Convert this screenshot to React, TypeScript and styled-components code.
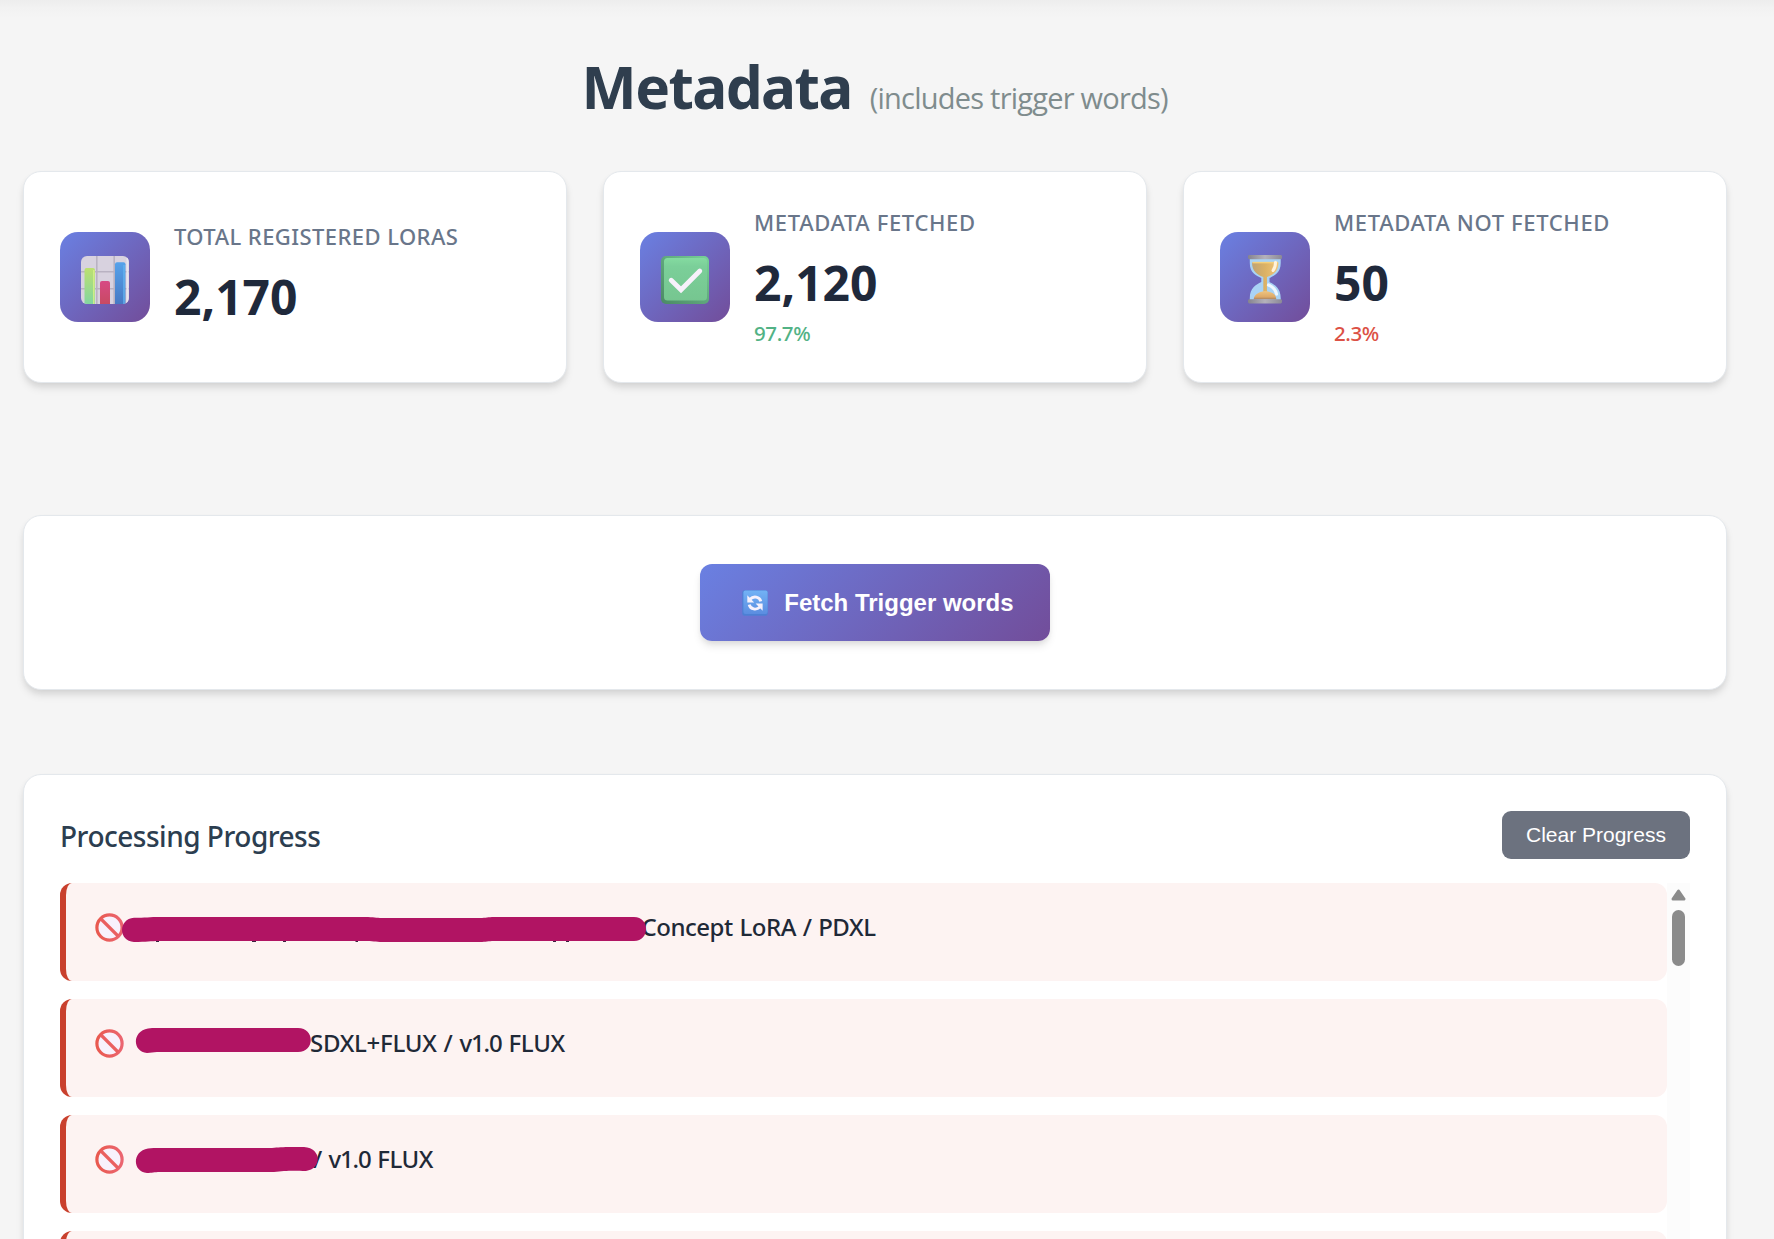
import React from "react";
import styled, { createGlobalStyle } from "styled-components";

const GlobalStyle = createGlobalStyle`
  * { box-sizing: border-box; }
  html, body { margin: 0; height: 1239px; overflow: hidden; background: #f5f5f5; }
  body { font-family: "Noto Sans", "Open Sans", sans-serif; }
`;

const Page = styled.main`
  display: flex;
  flex-direction: column;
  height: 1239px;
  overflow: hidden;
  padding: 50px 47.5px 0 23px;
  background: linear-gradient(to bottom, #ededed 0, #f2f2f2 8px, #f5f5f5 18px);
`;

const PageHeader = styled.header`
  display: flex;
  align-items: baseline;
  justify-content: center;
  gap: 18px;
  height: 72px;
  flex: none;
  margin-bottom: 49px;
`;

const Title = styled.h1`
  margin: 0;
  font: 700 58.5px/72px "Noto Sans", sans-serif;
  letter-spacing: -1.6px;
  color: #2f3e4e;
`;

const Subtitle = styled.span`
  font: 400 29px/40px "Open Sans", sans-serif;
  letter-spacing: -0.77px;
  color: #7f8c8d;
`;

const Surface = styled.section`
  background: #fff;
  border: 1px solid #e4e8ec;
  border-radius: 18px;
  box-shadow: 0 6px 9px -1px rgba(0, 0, 0, 0.1), 0 3px 6px -1px rgba(0, 0, 0, 0.06);
`;

const StatGrid = styled.div`
  display: grid;
  grid-template-columns: repeat(3, 1fr);
  gap: 36.5px;
  height: 212px;
  flex: none;
  margin-bottom: 132px;
`;

const StatCard = styled(Surface)`
  display: flex;
  align-items: center;
  gap: 24px;
  padding: 0 36px;
`;

const StatIcon = styled.div`
  display: flex;
  justify-content: center;
  flex: none;
  width: 90px;
  height: 90px;
  padding-top: 24px;
  border-radius: 18px;
  background: linear-gradient(135deg, #6a80e2, #724d9a);

  svg { width: 48px; height: 48px; overflow: visible; }
`;

const StatBody = styled.div`
  display: flex;
  flex-direction: column;
  white-space: nowrap;
`;

const StatLabel = styled.div<{ $tracking: number }>`
  margin-top: -1px;
  font-size: 22px;
  font-weight: 500;
  line-height: 33px;
  letter-spacing: ${(p) => p.$tracking}px;
  text-transform: uppercase;
  color: #69768a;
`;

const StatValue = styled.div`
  margin-top: 15px;
  font-size: 48px;
  font-weight: 700;
  line-height: 57px;
  color: #1f293b;
`;

const StatShare = styled.div<{ $tone?: "good" | "bad" }>`
  margin-top: 8px;
  margin-bottom: 1px;
  font-size: 20.5px;
  font-weight: 500;
  line-height: 28px;
  letter-spacing: -0.4px;
  color: ${(p) => (p.$tone === "bad" ? "#dc5145" : "#52b285")};

  &:empty { line-height: 0; }
`;

const ActionPanel = styled(Surface)`
  display: flex;
  align-items: center;
  justify-content: center;
  height: 175px;
  flex: none;
  margin-bottom: 84px;
`;

const FetchButton = styled.button`
  display: flex;
  align-items: center;
  gap: 16.5px;
  width: 350px;
  height: 77px;
  padding: 0 0 0 42px;
  border: 0;
  border-radius: 12px;
  background: linear-gradient(135deg, #6a80e2, #724d9a);
  box-shadow: 0 6px 9px -1px rgba(0, 0, 0, 0.1), 0 3px 5px -1px rgba(0, 0, 0, 0.06);
  font: 700 24px/36px "Liberation Sans", Arial, sans-serif;
  color: #fff;
  white-space: nowrap;

  svg { width: 26px; height: 26px; flex: none; margin-top: 1px; }
`;

const ProgressPanel = styled(Surface)`
  display: flex;
  flex-direction: column;
  height: 640px;
  flex: none;
  padding: 36px 35.5px 0 36px;
`;

const ProgressHeader = styled.div`
  display: flex;
  justify-content: space-between;
  height: 48px;
  flex: none;
  margin-bottom: 24px;
`;

const ProgressTitle = styled.h2`
  margin: 0;
  font-size: 28px;
  font-weight: 500;
  line-height: 51px;
  letter-spacing: -0.49px;
  color: #2c3e50;
`;

const ClearButton = styled.button`
  width: 188px;
  height: 48px;
  padding: 0 0 1px;
  border: 0;
  border-radius: 9px;
  background: #6c727f;
  font: 400 21px/46px "Liberation Sans", Arial, sans-serif;
  color: #fff;
  white-space: nowrap;
`;

const LogViewport = styled.div`
  display: flex;
  flex: 1;
  min-height: 0;
`;

const LogList = styled.ul`
  display: flex;
  flex-direction: column;
  flex: 1;
  gap: 18px;
  margin: 0;
  padding: 0;
  list-style: none;
`;

const LogRow = styled.li`
  display: flex;
  align-items: center;
  height: 98px;
  flex: none;
  padding: 0 0 10px 29px;
  border-left: 6px solid #c9402d;
  border-radius: 12px;
  background: #fdf3f2;
`;

const BlockedIcon = styled.svg`
  width: 29px;
  height: 29px;
  flex: none;
  margin-top: 1px;
`;

const HiddenName = styled.span<{ $width: number }>`
  position: relative;
  width: ${(p) => p.$width}px;
  height: 88px;
  flex: none;
`;

const Marker = styled.svg`
  position: absolute;
  top: 0;
  left: -124px;
  z-index: 1;
  width: 700px;
  height: 88px;
`;

const LogText = styled.span<{ $tracking: number }>`
  font-size: 24px;
  font-weight: 500;
  line-height: 36px;
  letter-spacing: ${(p) => p.$tracking}px;
  word-spacing: 1px;
  color: #1f2937;
  white-space: nowrap;
`;

const Version = styled.span`
  letter-spacing: -1.15px;
`;

const ScrollTrack = styled.div`
  display: flex;
  flex-direction: column;
  align-items: center;
  width: 23px;
  flex: none;
  padding-top: 6px;
  background: #fcfcfc;

  svg { width: 15px; height: 12px; flex: none; }
`;

const ScrollThumb = styled.div`
  width: 13px;
  height: 56px;
  margin-top: 9px;
  border-radius: 7px;
  background: #8b8b8b;
`;

const ChartIcon = () => (
  <svg viewBox="0 0 48 48">
    <defs>
      <linearGradient id="barGreen" x2="0" y2="1"><stop stopColor="#bde070" /><stop offset="1" stopColor="#82d6a0" /></linearGradient>
      <linearGradient id="barRed" x2="0" y2="1"><stop stopColor="#d74a85" /><stop offset="1" stopColor="#c84a62" /></linearGradient>
      <linearGradient id="barBlue" x2="0" y2="1"><stop stopColor="#56a2ea" /><stop offset="1" stopColor="#4779c4" /></linearGradient>
      <clipPath id="sheet"><rect width="48" height="48" rx="6" /></clipPath>
    </defs>
    <g clipPath="url(#sheet)">
      <rect width="48" height="48" fill="#d8d2df" />
      <path d="M15.8 0V48M33.2 0V48M0 15.8H48M0 32.8H48" stroke="#b9b2c2" strokeWidth="1.6" />
      <path d="M46.5 2V46" stroke="#e8e4ee" strokeWidth="2" />
      <path d="M3.5 48V14a2 2 0 0 1 2-2H12a2 2 0 0 1 2 2V48Z" fill="url(#barGreen)" />
      <path d="M12.8 14V48" stroke="#d5ef88" strokeWidth="1.4" />
      <path d="M19 48V27a2 2 0 0 1 2-2h6a2 2 0 0 1 2 2V48Z" fill="url(#barRed)" />
      <path d="M34 48V8.3a2 2 0 0 1 2-2h6.5a2 2 0 0 1 2 2V48Z" fill="url(#barBlue)" />
      <path d="M43 9V48" stroke="#64b4ef" strokeWidth="1.4" />
    </g>
  </svg>
);

const CheckIcon = () => (
  <svg viewBox="0 0 48 48">
    <defs>
      <linearGradient id="checkFill" x2="0" y2="1"><stop stopColor="#84dba0" /><stop offset=".2" stopColor="#7bcf99" /><stop offset="1" stopColor="#76c690" /></linearGradient>
      <linearGradient id="checkEdge" x1="0" y1="1" x2="1" y2="0"><stop stopColor="#4b8a65" /><stop offset=".5" stopColor="#5fa77c" /><stop offset="1" stopColor="#78d598" /></linearGradient>
    </defs>
    <rect width="48" height="48" rx="5" fill="url(#checkEdge)" />
    <rect x="3" y="2" width="43" height="42.5" rx="3.5" fill="url(#checkFill)" />
    <path d="M10.2 24.2 20 33.8 38.8 15" fill="none" stroke="#f7f1fb" strokeWidth="4.8" strokeLinecap="round" />
  </svg>
);

const HourglassIcon = () => (
  <svg viewBox="0 0 48 48">
    <defs>
      <linearGradient id="capMetal" x2="1" y2="0"><stop stopColor="#85838e" /><stop offset=".5" stopColor="#b4b2bb" /><stop offset="1" stopColor="#8b8996" /></linearGradient>
      <linearGradient id="sandTop" x2="1" y2="0"><stop stopColor="#bfa375" /><stop offset=".5" stopColor="#dcb265" /><stop offset="1" stopColor="#f0c579" /></linearGradient>
      <linearGradient id="sandBottom" x2="0" y2="1"><stop stopColor="#efc581" /><stop offset=".7" stopColor="#dda968" /><stop offset="1" stopColor="#a27d60" /></linearGradient>
    </defs>
    <path d="M8.8 2H39.7V7C39.7 17 33.5 19.5 28.5 22V26C33.5 28.5 39.7 32 39.7 42V44H8.8V42C8.8 32 15 28.5 20.3 26V22C15 19.5 8.8 17 8.8 7Z" fill="#a9d3f5" />
    <path d="M11 6.5 H37.5C37.5 16.5 31 19 26 21V39H22.3V21C17 19 11 16 11 6.5Z" fill="url(#sandTop)" />
    <path d="M11.5 6.6H37" stroke="#f5d07c" strokeWidth="1.5" />
    <path d="M12.7 43.5C13 38.5 18 36.5 20.5 35.8Q24.2 34 28 35.8C32 37 35.3 39 35.3 43.5Z" fill="url(#sandBottom)" />
    <path d="M34.5 6.2Q34.5 11.5 32 14.5" fill="none" stroke="#fff2da" strokeWidth="3" strokeLinecap="round" />
    <path d="M27.5 29Q34 31.5 35.5 38" fill="none" stroke="#eff7fe" strokeWidth="3.2" strokeLinecap="round" />
    <rect x="7" y="-1" width="34" height="4.2" rx="1.4" fill="url(#capMetal)" />
    <rect x="7" y="43.2" width="34" height="4.2" rx="1.4" fill="url(#capMetal)" />
  </svg>
);

const RefreshIcon = () => (
  <svg viewBox="0 0 26 26">
    <defs>
      <linearGradient id="tile" x2="0" y2="1"><stop stopColor="#72b2f5" /><stop offset="1" stopColor="#5b8de0" /></linearGradient>
    </defs>
    <rect x=".3" y=".3" width="25.4" height="25.4" rx="2.5" fill="#4c80d4" />
    <rect x="1.4" y=".6" width="24.2" height="23.4" rx="2" fill="url(#tile)" />
    <g fill="none" stroke="#f6f1fc" strokeWidth="2.9">
      <path d="M8 9.2C11.5 5.6 17.6 6.6 18.8 11.4" />
      <path d="M18 17C14.4 20.4 8.5 19.6 7.2 14.6" />
    </g>
    <path d="M5.3 5.2V12.4H12.2Z" fill="#f6f1fc" />
    <path d="M20.6 20.8V13.6H13.6Z" fill="#f6f1fc" />
  </svg>
);

const Blocked = () => (
  <BlockedIcon viewBox="0 0 29 29">
    <defs>
      <linearGradient id="ban" x1="0" y1=".3" x2="1" y2=".3"><stop stopColor="#e9594f" /><stop offset="1" stopColor="#eb6570" /></linearGradient>
    </defs>
    <circle cx="14.5" cy="14.5" r="12.6" fill="#f8f1fc" stroke="url(#ban)" strokeWidth="3.2" />
    <path d="M6 6 23 23" stroke="#ea5f60" strokeWidth="3.2" />
  </BlockedIcon>
);

/* Marker strokes are drawn in coordinates measured from the page's left edge. */
const LongMarker = () => (
  <Marker viewBox="0 0 700 88">
    <path
      d="M134 34.8C145 34.8 150 34 160 34H365C374 34 376 35 382 35H480C486 35 488 34 494 34H634C650 34 650 58 634 58H494C488 58 486 59 480 59H382C376 59 372 58 365 58H160C150 58 147 59 134 59C118 58 118 36 134 34.8Z"
      fill="#b11463"
    />
    <path d="M156 58.5h3M252 58.5h4M283 58.5h3M355.500 58.5h2.500M553 58.5h3M566 58.5h3" stroke="#3a2340" strokeWidth="1.2" />
  </Marker>
);

const SecondMarker = () => (
  <Marker viewBox="0 0 700 88">
    <path d="M148 29.600C151 29 153 29 157 29H298C315 29 315 53 298 53H157C153 53 151 54 147 54C132 53 132 32 148 29.600Z" fill="#b11463" />
  </Marker>
);

const ThirdMarker = () => (
  <Marker viewBox="0 0 700 88">
    <path d="M148 33.500C152 33 155 33 160 33H272C280 32 285 31.700 304 32C322 33 322 54 306 56C290 55.300 284 56 274 57H160C154 57 152 58 147 58C132 57 132 36 148 33.500Z" fill="#b11463" />
  </Marker>
);

const stats = [
  { label: "Total Registered LoRAs", tracking: 0.43, value: "2,170", icon: <ChartIcon /> },
  { label: "Metadata Fetched", tracking: 0.62, value: "2,120", share: "97.7%", tone: "good" as const, icon: <CheckIcon /> },
  { label: "Metadata Not Fetched", tracking: 0.63, value: "50", share: "2.3%", tone: "bad" as const, icon: <HourglassIcon /> },
];

const rows = [
  { text: "Concept LoRA / PDXL", tracking: -0.48, hidden: 517.5, marker: <LongMarker /> },
  { text: <>SDXL+FLUX / <Version>v1.0</Version> FLUX</>, tracking: -0.28, hidden: 186, marker: <SecondMarker /> },
  { text: <>/ <Version>v1.0</Version> FLUX</>, tracking: -0.5, hidden: 189, marker: <ThirdMarker /> },
  { text: "", tracking: 0, hidden: 0, marker: null },
];

export default function App() {
  return (
    <>
      <GlobalStyle />
      <Page>
        <PageHeader>
          <Title>Metadata</Title>
          <Subtitle>(includes trigger words)</Subtitle>
        </PageHeader>
        <StatGrid>
          {stats.map((s) => (
            <StatCard key={s.label}>
              <StatIcon>{s.icon}</StatIcon>
              <StatBody>
                <StatLabel $tracking={s.tracking}>{s.label}</StatLabel>
                <StatValue>{s.value}</StatValue>
                <StatShare $tone={s.tone}>{s.share}</StatShare>
              </StatBody>
            </StatCard>
          ))}
        </StatGrid>
        <ActionPanel>
          <FetchButton>
            <RefreshIcon />
            Fetch Trigger words
          </FetchButton>
        </ActionPanel>
        <ProgressPanel>
          <ProgressHeader>
            <ProgressTitle>Processing Progress</ProgressTitle>
            <ClearButton>Clear Progress</ClearButton>
          </ProgressHeader>
          <LogViewport>
            <LogList>
              {rows.map((r, i) => (
                <LogRow key={i}>
                  <Blocked />
                  <HiddenName $width={r.hidden}>{r.marker}</HiddenName>
                  <LogText $tracking={r.tracking}>{r.text}</LogText>
                </LogRow>
              ))}
            </LogList>
            <ScrollTrack>
              <svg viewBox="0 0 15 12">
                <path d="M7.500 2 13 10H2Z" fill="#8b8b8b" stroke="#8b8b8b" strokeWidth="3" strokeLinejoin="round" />
              </svg>
              <ScrollThumb />
            </ScrollTrack>
          </LogViewport>
        </ProgressPanel>
      </Page>
    </>
  );
}
